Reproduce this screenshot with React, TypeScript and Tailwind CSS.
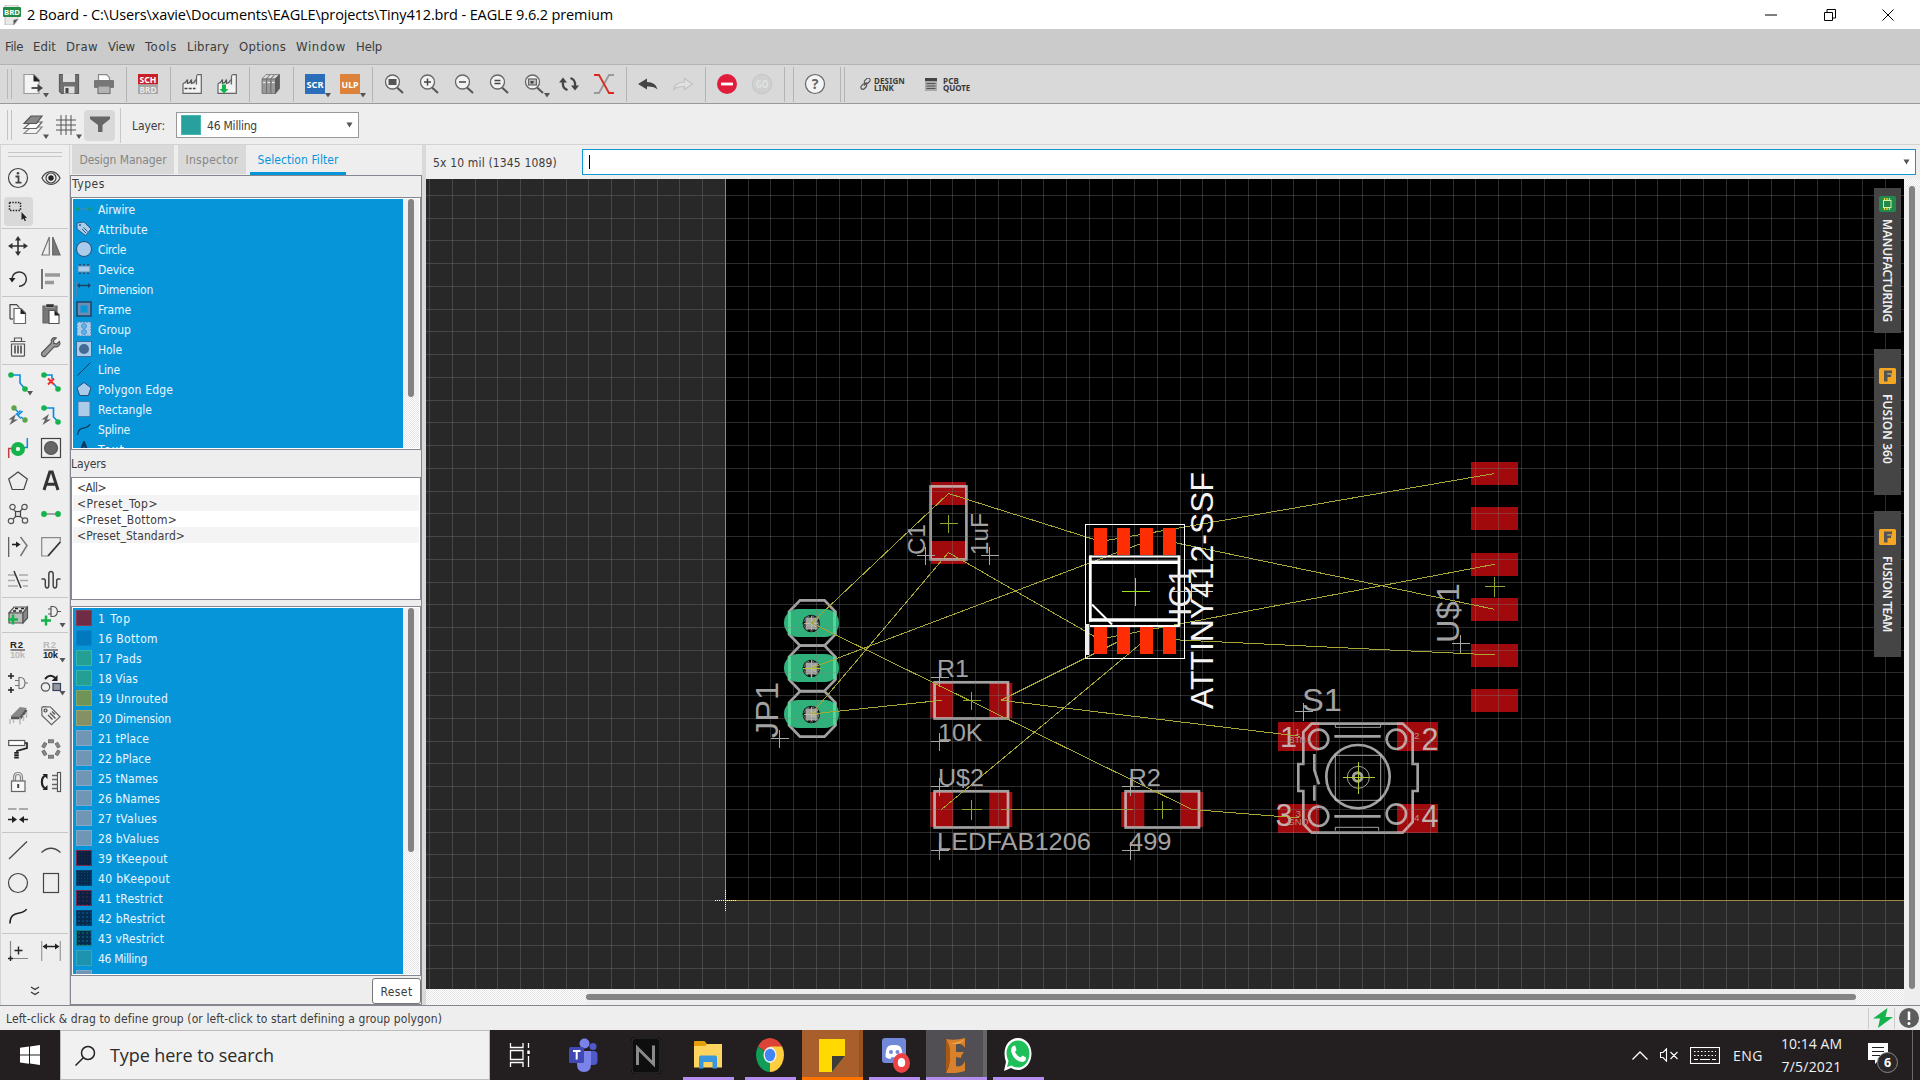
import React, { useLayoutEffect, useRef, useState } from "react";

/* Text whose tracking is computed so that it fills a given advance width. */
function Fit({ w, className = "", children }: { w: number; className?: string; children: string }) {
  const ref = useRef<HTMLSpanElement>(null);
  const [ls, setLs] = useState(0);
  useLayoutEffect(() => {
    if (ref.current && children.length > 0) {
      setLs((w - ref.current.getBoundingClientRect().width) / children.length);
    }
  }, [w, children]);
  return (
    <span ref={ref} className={"inline-block shrink-0 whitespace-pre " + className} style={{ letterSpacing: ls }}>
      {children}
    </span>
  );
}

const UI = "font-['DejaVu_Sans_Condensed','DejaVu_Sans',sans-serif]";

function Ico({ children, arrow }: { children: React.ReactNode; arrow?: boolean }) {
  return (
    <svg width="20" height="20" viewBox="0 0 20 20" className="shrink-0 overflow-visible" fill="none" stroke="#444" strokeWidth="1.2">
      {children}
      {arrow && <path d="M20 19h6l-3 4.5z" fill="#555" stroke="none" />}
    </svg>
  );
}

const G = "#14b34c";
const B = "#0a8de0";

const I = {
  info: (
    <>
      <circle cx="10" cy="10" r="9.5" />
      <path d="M7.5 8.5h3v6M7.5 14.7h6" strokeWidth="1.8" />
      <circle cx="10" cy="5.3" r="1.3" fill="#444" stroke="none" />
    </>
  ),
  eye: (
    <>
      <path d="M1 10C5 1.500 15 1.500 19 10C15 18.500 5 18.500 1 10z" />
      <circle cx="10" cy="10" r="5" />
      <circle cx="10" cy="10" r="2.700" fill="#222" stroke="none" />
    </>
  ),
  select: (
    <>
      <rect x="1.500" y="1.500" width="11" height="8" strokeDasharray="1.500 1.300" stroke="#222" strokeWidth="1.500" />
      <path d="M13.500 11v8l2-1.600 1.300 2.800 1.200-.600-1.300-2.600h2.300z" fill="#222" stroke="none" />
    </>
  ),
  move: (
    <path d="M10 0l3 4.500h-2.200v4.700h4.700V7l4.500 3-4.500 3v-2.200h-4.700v4.700H13L10 20l-3-4.500h2.200v-4.700H4.500V13L0 10l4.500-3v2.200h4.700V4.500H7z" fill="#333" stroke="none" />
  ),
  mirror: (
    <>
      <path d="M8.300 1v18H1z" stroke="#777" />
      <path d="M11.700 1v18H19z" fill="#777" stroke="#666" />
    </>
  ),
  rotate: (
    <>
      <path d="M4 9.500a7.200 7.200 0 1 1 7 7.800" stroke="#333" strokeWidth="1.500" />
      <path d="M1 9h6.500L4 13.500z" fill="#222" stroke="none" />
    </>
  ),
  align: (
    <>
      <path d="M1 0v20" stroke="#222" />
      <path d="M4 6h15M4 13.500h9" stroke="#999" strokeWidth="3.700" />
    </>
  ),
  copy: (
    <>
      <path d="M2 15V.700h6.500l3 3" />
      <path d="M2 15h3" />
      <path d="M6 4.500h7l4.500 4.500v10.500H6z" fill="#fff" stroke="#666" />
      <path d="M12.500 4.500l5.500 5.500h-5.500z" fill="#222" stroke="none" />
    </>
  ),
  paste: (
    <>
      <path d="M2 2h14v17H2z" fill="#777" stroke="#666" />
      <path d="M5 0h8v3.500H5z" fill="#333" stroke="#ddd" strokeWidth=".5" />
      <path d="M8 6.500h6l4 4v9H8z" fill="#fff" stroke="#555" />
      <path d="M13.500 6.500l5 5h-5z" fill="#222" stroke="none" />
    </>
  ),
  trash: (
    <>
      <path d="M2.500 4.500h15M6.500 4V1h7v3M3.500 7v11.200q0 1 1 1h11q1 0 1-1V7z" stroke="#555" />
      <path d="M7 8.500v8M10 8.500v8M13 8.500v8" stroke="#555" strokeWidth="1.700" />
    </>
  ),
  wrench: (
    <path d="M18.500 4.500l-3 2.500-2.700-.800L12.500 3.500 15.300 1C12.500-.300 9.300 2 10.300 6L.700 15.800q-.700 2 .700 3.200 1.300 1 3 .100L13.300 9.700C17 10.700 20 7.500 18.500 4.500z" fill="#999" stroke="#555" />
  ),
  route: (
    <>
      <path d="M3 3h9v8l5 6" stroke={B} strokeWidth="1.600" />
      <circle cx="3" cy="3" r="2.800" fill={G} stroke="none" />
      <circle cx="17" cy="17" r="2.800" fill={G} stroke="none" />
    </>
  ),
  ripup: (
    <>
      <path d="M3 3h8v4M13 12l4 5" stroke={B} strokeWidth="1.600" />
      <circle cx="3" cy="3" r="2.800" fill={G} stroke="none" />
      <circle cx="17" cy="17" r="2.800" fill={G} stroke="none" />
      <path d="M7 6.500l6 6M13 6.500l-6 6" stroke="#f22d2d" strokeWidth="2" />
    </>
  ),
  autor: (
    <>
      <path d="M6 3l4 4M13 12l4 3" stroke={B} strokeWidth="1.500" />
      <path d="M8 8.500l5 5M9.500 11l5-5M8.500 9.500l4-4" stroke={B} strokeWidth="1.500" />
      <circle cx="6" cy="3" r="2.700" fill="#5fa34a" stroke="none" />
      <circle cx="17" cy="15" r="2.700" fill="#5fa34a" stroke="none" />
      <path d="M8 9L.500 14.500H4L1.500 20 10 14.500H6z" fill="#666" stroke="none" />
    </>
  ),
  fanout: (
    <>
      <path d="M3 3h9.500v9l5 5" stroke={B} strokeWidth="1.700" />
      <circle cx="3" cy="3" r="2.800" fill={G} stroke="none" />
      <circle cx="17" cy="17" r="2.800" fill={G} stroke="none" />
      <path d="M8 9L.500 14.500H4L1.500 20 10 14.500H6z" fill="#666" stroke="none" />
    </>
  ),
  via: (
    <>
      <path d="M.700 20V10.500H4" stroke="#c33d45" strokeWidth="1.500" />
      <path d="M19.300 0v9.500H16" stroke={B} strokeWidth="1.500" />
      <circle cx="10" cy="11" r="4.500" stroke={G} strokeWidth="5" />
      <circle cx="10" cy="11" r="2" fill="#e8f5e8" stroke="none" />
    </>
  ),
  hole: (
    <>
      <rect x=".500" y=".500" width="19" height="19" />
      <circle cx="10" cy="10" r="6.500" fill="#666" stroke="#555" />
    </>
  ),
  polygon: <path d="M10 1l9.300 7-3.500 10.500H4.200L.700 8z" />,
  text: <path d="M3 19L8.800 1h2.400L17 19M5.500 13.200h9" stroke="#333" strokeWidth="3" />,
  ratsnest: (
    <>
      <path d="M4.500 4.500L15.500 15.500M15 4L4.500 16" stroke="#555" />
      {[[4.500, 3], [16.500, 3], [3, 17], [17, 16.500]].map(([x, y], i) => (
        <circle key={i} cx={x} cy={y} r="2.700" fill="#eee" stroke="#555" />
      ))}
      <rect x="7.500" y="7.500" width="5" height="5" fill="#ddd" />
    </>
  ),
  airwire: (
    <>
      <path d="M3 10h14" stroke="#888" strokeWidth="1.500" />
      <circle cx="3" cy="10" r="2.900" fill={G} stroke="none" />
      <circle cx="17" cy="10" r="2.900" fill={G} stroke="none" />
    </>
  ),
  mitersplit: (
    <>
      <path d="M.700 0v20" stroke="#555" />
      <path d="M4 7.500h7" stroke="#222" strokeWidth="1.600" />
      <path d="M8 4.500L12.500 7.500 8 10.500z" fill="#222" stroke="none" />
      <path d="M12.500 0L19 8.500 12.500 19" stroke="#777" strokeWidth="1.500" />
    </>
  ),
  miter: (
    <>
      <path d="M7 19H.700V.700h18.600V5" stroke="#888" />
      <path d="M19.300 5L7 19" stroke="#333" strokeWidth="1.800" />
    </>
  ),
  meanderA: (
    <>
      <path d="M0 5h7M11 5h9M0 10.500h7M12 10.500h8M0 16h10M15 16h5" stroke="#aaa" strokeWidth="1.500" />
      <path d="M6 1l7 17" stroke="#333" strokeWidth="1.500" />
    </>
  ),
  meander: (
    <path d="M.500 9H3q1.300 0 1.300 2v4q0 3 1.800 3 1.700 0 1.700-3V4.500Q7.800 1.500 10 1.500q2.200 0 2.200 3V15q0 3 1.700 3 1.800 0 1.800-3v-4q0-2 1.300-2h2.500" stroke="#444" strokeWidth="1.500" />
  ),
  brick: (
    <>
      <path d="M1 8l5-6h13l-4 6z" fill="#ddd" stroke="#555" />
      <path d="M1 8h14v10H1z" fill="#bbb" stroke="#555" />
      <path d="M15 8l4.500-6v11L15 18z" fill="#888" stroke="#555" />
      <path d="M7 3.500h3M13 3.500h3M5 6h3M11 6h3" stroke="#222" strokeWidth="1.500" />
      <path d="M5 9.500v10M0 14.500h10" stroke={G} strokeWidth="2.500" />
    </>
  ),
  gate: (
    <>
      <path d="M10 1.500h1.500q4.500 0 5 5-.500 5-5 5H10zM7 4h3M7 9h3M16.500 6.500H20" stroke="#555" />
      <path d="M5 10.500v10M0 15.500h10" stroke={G} strokeWidth="2.500" />
    </>
  ),
  name: (
    <>
      <path d="M2.500 10h14.500" stroke="#444" />
      <text x="2" y="7.500" fontSize="9.500" fontWeight="700" fill="#222" stroke="none" textLength="13" fontFamily="Liberation Sans">R2</text>
      <text x="2" y="17.700" fontSize="9.500" fontWeight="700" fill="#bbb" stroke="none" textLength="15" fontFamily="Liberation Sans">10k</text>
    </>
  ),
  value: (
    <>
      <path d="M2.500 10h14.500" stroke="#444" />
      <text x="2" y="7.500" fontSize="9.500" fontWeight="700" fill="#bbb" stroke="none" textLength="13" fontFamily="Liberation Sans">R2</text>
      <text x="2" y="17.700" fontSize="9.500" fontWeight="700" fill="#222" stroke="none" textLength="15" fontFamily="Liberation Sans">10k</text>
    </>
  ),
  smash: (
    <>
      <path d="M11 4.500h1.500q4.200 0 4.500 5.500-.300 5.500-4.500 5.500H11zM7 7.500h4M7 12.500h4M17 10h3" stroke="#777" />
      <path d="M3 0v6M0 3h6M3 14v6M0 17h6" stroke="#222" strokeWidth="1.500" />
    </>
  ),
  replace: (
    <>
      <circle cx="4.500" cy="14" r="4.200" stroke="#555" />
      <rect x="12" y="10.500" width="7.500" height="7" fill="#999" stroke="#346" />
      <path d="M4 6q5-6 10.500-1" stroke="#222" strokeWidth="2" />
      <path d="M16.500 2v6h-6z" fill="#222" stroke="none" />
    </>
  ),
  pinswap: (
    <>
      <path d="M3 10L12 1l7 1-6 9H3z" fill="#888" stroke="none" />
      <path d="M3 12h9.500l6-8" stroke="#555" strokeWidth="2.500" />
      <path d="M2 13v5M5.500 13v4M12 11.500v7M15.500 9v6M18.500 6v6" stroke="#bbb" strokeWidth="1.500" />
    </>
  ),
  tag: (
    <>
      <path d="M.700 2Q1 .700 2.500.700L9.500 1 19 10.800 10.500 18.700 1 9.500z" stroke="#666" />
      <circle cx="4.500" cy="4.500" r="1.500" />
      <path d="M7 9l4.500 4.500M9 7l5.500 5.500M11 5.500l3 3" stroke="#555" strokeWidth="1.300" />
    </>
  ),
  paint: (
    <>
      <rect x=".700" y="1.500" width="16" height="5" fill="#fff" stroke="#555" />
      <path d="M17 4h2v5l-10 3v2" stroke="#222" strokeWidth="1.700" />
      <path d="M8.500 13v7" stroke="#222" strokeWidth="4.500" strokeDasharray="1.700 .5" />
    </>
  ),
  ring: (
    <g fill="#888" stroke="#666" strokeWidth=".8">
      {[0, 60, 120, 180, 240, 300].map((a) => (
        <rect key={a} x="7.500" y=".800" width="5" height="3" transform={`rotate(${a} 10 10)`} />
      ))}
    </g>
  ),
  lock: (
    <>
      <path d="M5.500 9V5.500q0-5 4.500-5t4.500 5V9M7.500 9V5.500q0-3 2.500-3t2.500 3V9" stroke="#888" />
      <rect x="3.500" y="9" width="13.500" height="10.500" fill="#f8f8f8" stroke="#666" />
      <path d="M10.200 12v4" stroke="#444" strokeWidth="2" />
    </>
  ),
  swap: (
    <>
      <path d="M4.500 3.500Q.800 5 .900 10t3.600 6.500" stroke="#222" strokeWidth="2.200" />
      <path d="M1.500 2h5v5zM1.500 18h5v-5z" fill="#222" stroke="none" />
      <path d="M11 3.500h5M11 7.500h5M11 12.500h5M11 16.500h5" stroke="#666" strokeWidth="1.500" />
      <rect x="16.500" y=".500" width="3" height="19" fill="#fff" stroke="#555" />
    </>
  ),
  join: (
    <>
      <path d="M0 4h8.500M11 4h9" stroke="#aaa" strokeWidth="1.800" />
      <path d="M0 14.500h5M15 14.500h5" stroke="#222" strokeWidth="1.500" />
      <path d="M4 11l5 3.500L4 18zM16 11l-5 3.500 5 3.500z" fill="#222" stroke="none" />
    </>
  ),
  line: <path d="M1 19L19 1.500" stroke="#444" />,
  arc: <path d="M.500 12.500Q10 4 19.500 12.500" stroke="#444" />,
  circle: <circle cx="10" cy="10" r="9.500" />,
  rect: <rect x="2.500" y=".500" width="15" height="19" />,
  spline: <path d="M2 17.500C2 3 15 10 18.500 3" stroke="#222" strokeWidth="1.600" />,
  mark: (
    <>
      <path d="M2.500 0v15M5 17.500h15" stroke="#888" />
      <path d="M2.500 15v5M0 17.500h5M10.500 5.500v8M6.500 9.500h8" stroke="#222" strokeWidth="1.400" />
    </>
  ),
  dim: (
    <>
      <path d="M.700 0v20M19.300 0v20" stroke="#999" />
      <path d="M4 5.500h12" stroke="#222" strokeWidth="1.500" />
      <path d="M6 2.500L1.500 5.500 6 8.500zM14 2.500l4.500 3-4.500 3z" fill="#222" stroke="none" />
    </>
  ),
};

type IK = keyof typeof I;
const toolGroups: { cls: string; items: (IK | null)[] }[] = [
  { cls: "h-[67px]", items: ["info", "eye", "select", null] },
  { cls: "h-[67px]", items: ["move", "mirror", "rotate", "align"] },
  { cls: "h-[67px]", items: ["copy", "paste", "trash", "wrench"] },
  { cls: "h-[232px]", items: ["route", "ripup", "autor", "fanout", "via", "hole", "polygon", "text", "ratsnest", "airwire", "mitersplit", "miter", "meanderA", "meander"] },
  { cls: "h-[34px]", items: ["brick", "gate"] },
  { cls: "h-[199px]", items: ["name", "value", "smash", "replace", "pinswap", "tag", "paint", "ring", "lock", "swap", "join", null] },
  { cls: "h-[100px]", items: ["line", "arc", "circle", "rect", "spline", null] },
  { cls: "h-[34px]", items: ["mark", "dim"] },
];
const withArrow: (IK | null)[] = ["gate", "value", "replace"];

function ToolPalette() {
  return (
    <div className="w-[70px] shrink-0 border-x border-[#d4d4d4] bg-[#eee] flex flex-col">
      <div className="h-[16px] px-[7px] pt-[7px] shrink-0">
        <div className="h-[5px] border-y border-[#c6c6c6]" />
      </div>
      {toolGroups.map((g, i) => (
        <React.Fragment key={i}>
          {i > 0 && <div className="h-px shrink-0 mx-px bg-[#c6c6c6]" />}
          <div className={"grid grid-cols-[33px_33px] auto-rows-fr shrink-0 pl-[0.5px] " + g.cls}>
            {g.items.map((k, j) => (
              <div key={j} className="flex items-center justify-center min-h-0">
                {k === "select" ? (
                  <div className="size-[29px] shrink-0 rounded-sm bg-[#d9d9d9] flex items-center justify-center">
                    <Ico>{I.select}</Ico>
                  </div>
                ) : (
                  k && (
                    <Ico>
                      {I[k]}
                      {withArrow.includes(k) && <path d="M18.500 18h6l-3 4.500z" fill="#555" stroke="none" />}
                      {k === "route" && <path d="M19 19h6l-3 4.500z" fill="#555" stroke="none" />}
                    </Ico>
                  )
                )}
              </div>
            ))}
          </div>
        </React.Fragment>
      ))}
      <div className="grow flex justify-center pt-[18px]">
        <svg width="10" height="10" viewBox="0 0 10 10" fill="none" stroke="#333" strokeWidth="1.300">
          <path d="M1 1l4 2.500L9 1M1 6l4 2.500L9 6" />
        </svg>
      </div>
    </div>
  );
}

function Mag({ children }: { children?: React.ReactNode }) {
  return (
    <>
      <path d="M13 13.500l6 5.500" stroke="#555" strokeWidth="2" />
      <circle cx="8.500" cy="8" r="7" fill="#f2f2f2" stroke="#666" strokeWidth="1.300" />
      {children}
    </>
  );
}

function Sep() {
  return <div className="w-px h-[35px] bg-[#b4b4b4]" />;
}

function Cell({ cls, children }: { cls: string; children: React.ReactNode }) {
  return <div className={"flex items-center justify-center shrink-0 " + cls}>{children}</div>;
}

function Factory({ children }: { children: React.ReactNode }) {
  return (
    <Ico>
      <path d="M1 9.500L14 10.500V2q0-1.300 1.500-1.300h3.800v18.600H1z" fill="#f2f2f2" stroke="none" />
      <path d="M1 9.500v9.800h18.300V.700h-3.300q-1.500 0-1.500 2v7.800" stroke="#666" />
      <path d="M1 9.500q3-.700 4.500-4v4q3-.700 4-4v4q3-.700 4.500-4" stroke="#555" />
      {children}
    </Ico>
  );
}

function MainToolbar() {
  return (
    <div className="h-[40px] bg-[#d9d9d9] border-t border-t-[#b4b4b4] border-b border-b-[#9a9a9a] flex items-center">
      <div className="w-[15px] pl-[7px] flex gap-[3px] shrink-0"><div className="w-px h-[30px] bg-[#b8b8b8]" /><div className="w-px h-[30px] bg-[#b8b8b8]" /></div>
      <Cell cls="w-[36px]">
        <Ico arrow>
          <path d="M1 .500h10l5 5v14H1z" fill="#f4f4f4" stroke="#999" />
          <path d="M10.500.500l6 6v1h-6z" fill="#222" stroke="none" />
          <path d="M8.500 14h7" stroke="#555" strokeWidth="2" />
          <path d="M14.500 10l5.500 4-5.500 4z" fill="#444" stroke="none" />
        </Ico>
      </Cell>
      <Cell cls="w-[35px]">
        <Ico>
          <path d="M.500.500h19v19h-17l-2-2z" fill="#707070" stroke="#5c5c5c" />
          <rect x="4" y="0" width="12" height="8" fill="#ddd" stroke="none" />
          <rect x="5" y="12.500" width="10.500" height="7" fill="#ddd" stroke="none" />
          <rect x="6.500" y="14" width="3" height="5" fill="#444" stroke="none" />
        </Ico>
      </Cell>
      <Cell cls="w-[35px]">
        <Ico>
          <path d="M4.500 6V.700h8l3 3V6" fill="#fff" stroke="#888" />
          <rect x="0" y="6" width="20" height="8" rx="1" fill="#777" stroke="none" />
          <rect x="4" y="12" width="12" height="7.500" fill="#b4b4b4" stroke="#777" />
        </Ico>
      </Cell>
      <Cell cls="w-[10px]"><Sep /></Cell>
      <Cell cls="w-[34px]">
        <Ico>
          <rect width="20" height="10.500" fill="#c92027" stroke="none" />
          <rect y="10.500" width="20" height="9.500" fill="#a6a6a6" stroke="none" />
          <text x="1.500" y="8.800" fontSize="9.500" fontWeight="700" fill="#fff" stroke="none" textLength="17" lengthAdjust="spacingAndGlyphs" fontFamily="Noto Sans">SCH</text>
          <text x="1.500" y="18.700" fontSize="9.500" fontWeight="700" fill="#e8e8e8" stroke="none" textLength="17" lengthAdjust="spacingAndGlyphs" fontFamily="Noto Sans">BRD</text>
        </Ico>
      </Cell>
      <Cell cls="w-[10px]"><Sep /></Cell>
      <Cell cls="w-[34px]"><Factory><path d="M2.500 14.500h11" strokeWidth="1.700" strokeDasharray="3 1.200" /></Factory></Cell>
      <Cell cls="w-[36px]"><Factory><path d="M5 10.500h4v4.500h2.500L7 19.500 2.500 15H5z" fill={G} stroke="none" /></Factory></Cell>
      <Cell cls="w-[8px]"><Sep /></Cell>
      <Cell cls="w-[36px]">
        <Ico>
          {[1, 5.500, 10].map((x) => (
            <g key={x}>
              <path d={`M${x} 5l4-4.500h4l-4 4.500z`} fill="#ddd" stroke="#666" strokeWidth=".7" />
              <path d={`M${x} 5h4.500v14.500h-4.500z`} fill="#999" stroke="#666" strokeWidth=".7" />
              <path d={`M${x + 1} 8.500h2.500`} stroke="#eee" />
            </g>
          ))}
          <path d="M14.500 5l4-4.500v14l-4 5z" fill="#5c5c5c" stroke="#555" strokeWidth=".7" />
        </Ico>
      </Cell>
      <Cell cls="w-[9px]"><Sep /></Cell>
      <Cell cls="w-[34px]">
        <Ico arrow>
          <rect width="20" height="20" fill="#2a6db8" stroke="none" />
          <text x="1.500" y="13.500" fontSize="9.500" fontWeight="700" fill="#fff" stroke="none" textLength="17" lengthAdjust="spacingAndGlyphs" fontFamily="Noto Sans">SCR</text>
        </Ico>
      </Cell>
      <Cell cls="w-[36px]">
        <Ico arrow>
          <rect width="20" height="20" fill="#dd823b" stroke="none" />
          <text x="1.500" y="13.500" fontSize="9.500" fontWeight="700" fill="#fff" stroke="none" textLength="17" lengthAdjust="spacingAndGlyphs" fontFamily="Noto Sans">ULP</text>
        </Ico>
      </Cell>
      <Cell cls="w-[9px]"><Sep /></Cell>
      <Cell cls="w-[34px]"><Ico><Mag><rect x="4.500" y="5" width="8" height="6" fill="#555" stroke="none" /></Mag></Ico></Cell>
      <Cell cls="w-[35px]"><Ico><Mag><path d="M5 8h7M8.500 4.500v7" strokeWidth="1.500" /></Mag></Ico></Cell>
      <Cell cls="w-[35px]"><Ico><Mag><path d="M5 8h7" strokeWidth="1.500" /></Mag></Ico></Cell>
      <Cell cls="w-[35px]"><Ico><Mag><path d="M5.500 6.500h6M5.500 9.500h6" strokeWidth="1.500" /></Mag></Ico></Cell>
      <Cell cls="w-[35px]"><Ico arrow><Mag><rect x="4.500" y="5" width="8" height="6" fill="#bbb" stroke="#666" /><rect x="6.500" y="7" width="3" height="2.500" fill="#444" stroke="none" /></Mag></Ico></Cell>
      <Cell cls="w-[35px]">
        <Ico>
          <path d="M8.500 16Q3 14 4 8M11.500 4Q17 6 16 12" stroke="#444" strokeWidth="2.300" />
          <path d="M0 8.500h8L4 3.500zM12 11.500h8l-4 5z" fill="#444" stroke="none" />
        </Ico>
      </Cell>
      <Cell cls="w-[35px]">
        <Ico>
          <path d="M0 19h5L15 1h5" stroke="#999" strokeWidth="1.800" />
          <path d="M0 1h5l10 18h5" stroke="#d92a20" strokeWidth="1.800" />
        </Ico>
      </Cell>
      <Cell cls="w-[10px]"><Sep /></Cell>
      <Cell cls="w-[34px]"><Ico><path d="M0 10l9-5.500v3.500q9 0 10.500 7.500Q16 12 9 12.500v3z" fill="#444" stroke="none" /></Ico></Cell>
      <Cell cls="w-[36px]"><Ico><path d="M19.500 10l-8-5.500v3.500Q2 8 .700 15.200 4 12.500 11.500 12.500v3z" fill="#e0e0e0" stroke="#c2c2c2" /></Ico></Cell>
      <Cell cls="w-[9px]"><Sep /></Cell>
      <Cell cls="w-[34px]"><Ico><circle cx="10" cy="10" r="10" fill="#e01e3c" stroke="none" /><path d="M4 10h12" stroke="#fff" strokeWidth="2.800" /></Ico></Cell>
      <Cell cls="w-[36px]">
        <Ico>
          <circle cx="10" cy="10" r="9.700" fill="#d0d0d0" stroke="#c8c8c8" />
          <text x="3.700" y="13.500" fontSize="10" fill="#e2e2e2" stroke="none" textLength="12.500" lengthAdjust="spacingAndGlyphs" fontWeight="700" fontFamily="Noto Sans">GO</text>
        </Ico>
      </Cell>
      <Cell cls="w-[9px]"><Sep /></Cell>
      <Cell cls="w-[9px]"><Sep /></Cell>
      <Cell cls="w-[34px]">
        <Ico>
          <circle cx="10" cy="10" r="9.500" fill="#f4f4f4" stroke="#666" />
          <text x="10" y="15" textAnchor="middle" fontSize="14" fontWeight="700" fill="#666" stroke="none" fontFamily="Noto Sans">?</text>
        </Ico>
      </Cell>
      <div className="w-[28px] pl-[8px] flex gap-[3px] shrink-0"><Sep /><Sep /></div>
      <svg width="11" height="12" viewBox="0 0 11 12" className="mr-[3px] shrink-0" fill="none" stroke="#555" strokeWidth="1.200">
        <rect x="4" y="1" width="6.500" height="4" rx="2" transform="rotate(-45 7.200 3)" />
        <rect x=".500" y="6.500" width="6.500" height="4" rx="2" transform="rotate(-45 3.700 8.500)" />
        <path d="M4 7.500l3-3" />
      </svg>
      <div className="font-['Noto_Sans'] font-bold text-[8px] leading-[7.500px] text-[#3a3a3a] flex flex-col items-start w-[51px]">
        <Fit w={31}>DESIGN</Fit>
        <Fit w={20}>LINK</Fit>
      </div>
      <svg width="12" height="13" viewBox="0 0 12 13" className="shrink-0 mr-[6px]">
        <rect width="12" height="13" fill="#aaa" />
        <rect width="12" height="3" fill="#444" />
        <path d="M1.500 5.500h9M1.500 8h9M1.500 10.500h9" stroke="#555" />
      </svg>
      <div className="font-['Noto_Sans'] font-bold text-[8px] leading-[7.500px] text-[#3a3a3a] flex flex-col items-start">
        <Fit w={16}>PCB</Fit>
        <Fit w={27}>QUOTE</Fit>
      </div>
    </div>
  );
}

function LayerToolbar() {
  return (
    <div className={"h-[41px] pt-[2px] bg-[#eee] border-b border-[#d2d2d2] flex items-center text-[12px] text-[#3c3c3c] " + UI}>
      <div className="w-[16px] pl-[7px] flex gap-[3px] shrink-0"><div className="w-px h-[30px] bg-[#c4c4c4]" /><div className="w-px h-[30px] bg-[#c4c4c4]" /></div>
      <Cell cls="w-[33px]">
        <Ico>
          <path d="M1 18.500l7-6.500h11l-5.500 6.500z" fill="#f4f4f4" stroke="#888" />
          <path d="M1 13.500L8 7h11l-5.500 6.500z" fill="#fafafa" stroke="#666" />
          <path d="M1 8.500L8 1h11l-5.500 7.500z" fill="#888" stroke="#555" />
          <path d="M20 19.500h6l-3 4.500z" fill="#555" stroke="none" />
        </Ico>
      </Cell>
      <Cell cls="w-[34px]">
        <Ico>
          <path d="M5 0v20M10 0v20M15 0v20M0 5h20M0 10h20M0 15h20" stroke="#555" strokeWidth="1" />
          <path d="M20 19.500h6l-3 4.500z" fill="#555" stroke="none" />
        </Ico>
      </Cell>
      <div className="w-[31px] h-[31px] ml-px rounded-sm bg-[#d9d9d9] flex items-center justify-center">
        <Ico><path d="M0 1.500h20v2.500L12.500 10v7H8v-7L0 4z" fill="#666" stroke="none" /></Ico>
      </div>
      <div className="w-px h-[35px] bg-[#c8c8c8] ml-[5px] mr-[11px]" />
      <Fit w={33} className="pt-[2px]">Layer:</Fit>
      <div className="ml-[11px] w-[183px] h-[26px] border border-[#999] bg-white flex items-center pl-[4px] pr-[5px]">
        <div className="size-[20px] bg-[#27a09e] border border-[#45b8b4]" />
        <Fit w={50} className="ml-[6px] pt-[2px]">46 Milling</Fit>
        <svg width="7" height="6" viewBox="0 0 7 6" className="ml-auto"><path d="M.500.500h6l-3 5z" fill="#555" /></svg>
      </div>
    </div>
  );
}

const typeIcons: Record<string, React.ReactNode> = {
  Airwire: <><path d="M3 8h10" stroke="#4f87b0" /><circle cx="2" cy="8" r="2" fill="#109b72" stroke="none" /><circle cx="14" cy="8" r="2" fill="#109b72" stroke="none" /></>,
  Attribute: <><path d="M1 2l7-1 7 7-5.500 6.500L1 8z" fill="#aacbea" stroke="#28608a" /><circle cx="4" cy="4" r="1" fill="#28608a" /><path d="M6 8l4 4M7.500 6.500l4 4" stroke="#28608a" /></>,
  Circle: <circle cx="8" cy="8" r="7.500" fill="#aacbea" stroke="#28507a" />,
  Device: <><path d="M4 3v10M8 3v10M12 3v10" stroke="#234f75" strokeWidth="2" /><rect x="2" y="5" width="12" height="6" fill="#aacbea" stroke="#5590c0" /></>,
  Dimension: <><path d="M.500 0v16M15.500 0v16" stroke="#4a85b5" /><path d="M2 4.500h12" stroke="#1d4468" strokeWidth="1.500" /><path d="M1 4.500L4 2v5zM15 4.500L12 2v5z" fill="#1d4468" stroke="none" /></>,
  Frame: <><rect x="1" y="1" width="14" height="14" fill="#6d8eb4" stroke="#1d4468" strokeWidth="1.500" /><rect x="4.500" y="4.500" width="7" height="7" fill="#0795da" stroke="none" /></>,
  Group: <><rect x="1" y="1" width="14" height="14" fill="#aacbea" stroke="#4680b0" strokeDasharray="2 1" /><circle cx="8" cy="5" r="2.500" fill="#61b1e6" stroke="#4a9ad5" /><circle cx="8" cy="11" r="2.500" fill="#61b1e6" stroke="#4a9ad5" /></>,
  Hole: <><rect x=".500" y=".500" width="15" height="15" fill="#aacbea" stroke="#3f6f9c" /><circle cx="8" cy="8" r="5" fill="#426c94" stroke="none" /></>,
  Line: <path d="M1.500 14.500l13-13" stroke="#153a5c" />,
  "Polygon Edge": <path d="M8 1.500l7 5.300-2.700 7.700H3.700L1 6.800z" fill="#aacbea" stroke="#28507a" />,
  Rectangle: <rect x="2" y=".500" width="12" height="15" fill="#aacbea" stroke="#4a80b0" />,
  Spline: <path d="M1.500 14C3 3 11 10 14 3" stroke="#103050" strokeWidth="1.200" />,
  Text: <path d="M3 15L8 1.500 13 15M5 10h6" stroke="#123a60" strokeWidth="2.500" />,
};
const types: [string, number][] = [["Airwire", 37], ["Attribute", 50], ["Circle", 28], ["Device", 36], ["Dimension", 55], ["Frame", 33], ["Group", 33], ["Hole", 24], ["Line", 22], ["Polygon Edge", 75], ["Rectangle", 54], ["Spline", 32], ["Text", 27]];

const layers: [string, string, number][] = [
  ["1 Top", "bg-[#702b45] border-[#8b3a55]", 33],
  ["16 Bottom", "bg-[#0079bf] border-[#0a84cb]", 60],
  ["17 Pads", "bg-[#23a093] border-[#37b8a4]", 44],
  ["18 Vias", "bg-[#23a093] border-[#37b8a4]", 40],
  ["19 Unrouted", "bg-[#709458] border-[#85a865]", 70],
  ["20 Dimension", "bg-[#859064] border-[#9ca474]", 73],
  ["21 tPlace", "bg-[#7096b6] border-[#82a8c8]", 51],
  ["22 bPlace", "bg-[#7096b6] border-[#82a8c8]", 53],
  ["25 tNames", "bg-[#7096b6] border-[#82a8c8]", 60],
  ["26 bNames", "bg-[#7096b6] border-[#82a8c8]", 62],
  ["27 tValues", "bg-[#7096b6] border-[#82a8c8]", 59],
  ["28 bValues", "bg-[#7096b6] border-[#82a8c8]", 61],
  ["39 tKeepout", "bg-[#0b2144] border-[#7a2a4a] bg-[radial-gradient(#2e2347_1px,transparent_1px)] bg-[size:3px_3px]", 70],
  ["40 bKeepout", "bg-[#042a4e] border-[#07426f] bg-[radial-gradient(#07487a_1px,transparent_1px)] bg-[size:3px_3px]", 72],
  ["41 tRestrict", "bg-[#0b2144] border-[#7a2a4a] bg-[radial-gradient(#2e2347_1px,transparent_1px)] bg-[size:4px_4px]", 65],
  ["42 bRestrict", "bg-[#042a4e] border-[#07426f] bg-[radial-gradient(#07487a_1px,transparent_1px)] bg-[size:4px_4px]", 67],
  ["43 vRestrict", "bg-[#052c4c] border-[#14807c] bg-[radial-gradient(#0b5066_1px,transparent_1px)] bg-[size:4px_4px]", 66],
  ["46 Milling", "bg-[#1e93b0] border-[#35a8c0]", 49],
  ["", "bg-[#7096b6] border-[#82a8c8]", 0],
];

const CHECK = "bg-[conic-gradient(#e4e4e4_25%,#fff_0_50%,#e4e4e4_0_75%,#fff_0)] bg-[size:2px_2px]";

function FilterPanel() {
  return (
    <div className={"w-[352px] shrink-0 bg-[#eee] flex flex-col text-[12px] " + UI}>
      <div className="h-[30px] flex text-[#868686] shrink-0 pl-[2px]">
        <div className="w-[102px] h-[29px] bg-[#d9d9d9] flex items-center justify-center"><Fit w={87}>Design Manager</Fit></div>
        <div className="w-[68px] h-[29px] ml-[4px] bg-[#d9d9d9] flex items-center justify-center"><Fit w={53}>Inspector</Fit></div>
        <div className="w-[96px] h-[30px] ml-[4px] text-[#0795da] border-b-[3px] border-[#0795da] flex items-center justify-center pt-[2px]"><Fit w={81}>Selection Filter</Fit></div>
      </div>
      <div className="grow min-h-0 border border-[#868690] flex flex-col text-[#3c3c3c]">
        <div className="h-[21px] pl-px leading-[17px] shrink-0"><Fit w={33}>Types</Fit></div>
        <div className="h-[253px] shrink-0 border border-[#868690] bg-white p-px flex">
          <div className="w-[330px] bg-[#0795da] overflow-hidden text-[#eaf6ff]">
            {types.map(([t, w]) => (
              <div key={t} className="h-[20px] pl-[3px] flex items-center gap-[6px]">
                <svg width="16" height="16" viewBox="0 0 16 16" fill="none" strokeWidth="1">{typeIcons[t]}</svg>
                <Fit w={w} className="pt-[2px]">{t}</Fit>
              </div>
            ))}
          </div>
          <div className={"grow " + CHECK}>
            <div className="h-[198px] bg-[#f0f0f0] pl-[5px]"><div className="w-[6px] h-full rounded-full bg-[#838383]" /></div>
          </div>
        </div>
        <div className="h-[27px] leading-[29px] shrink-0"><Fit w={35}>Layers</Fit></div>
        <div className="h-[123px] shrink-0 border border-[#868690] bg-white px-px pt-px">
          {([["<All>", 29], ["<Preset_Top>", 81], ["<Preset_Bottom>", 100], ["<Preset_Standard>", 108]] as [string, number][]).map(([t, w]) => (
            <div key={t} className="h-[16px] leading-[19px] pl-[4px] even:bg-[#f4f4f4]"><Fit w={w}>{t}</Fit></div>
          ))}
        </div>
        <div className="h-[6px] shrink-0" />
        <div className="h-[370px] shrink-0 border border-[#868690] bg-white p-px flex">
          <div className="w-[330px] bg-[#0795da] overflow-hidden text-[#eaf6ff]">
            {layers.map(([t, c, w], i) => (
              <div key={i} className="h-[20px] pl-[3px] flex items-center gap-[6px]">
                <div className={"size-[16px] border shrink-0 " + c} />
                {t && <Fit w={w} className="pt-[2px]">{t}</Fit>}
              </div>
            ))}
          </div>
          <div className={"grow " + CHECK}>
            <div className="h-[244px] bg-[#f0f0f0] pl-[5px]"><div className="w-[6px] h-full rounded-full bg-[#838383]" /></div>
          </div>
        </div>
        <div className="grow flex justify-end items-start pt-[2px]">
          <div className="w-[49px] h-[26px] rounded-[3px] border border-[#777] bg-white flex items-center justify-center"><Fit w={32} className="pt-[2px]">Reset</Fit></div>
        </div>
      </div>
    </div>
  );
}

/* ---- board drawing ---- */
const OX = 725.4;
const OY = 900.4;
const P = 22.742;
const SILK = "rgba(206,206,206,.78)";
const NAME = "#a2a2a2";
const RED = "#a00a0c";

function Cross({ x, y, r = 9, c = "#a8a8a8" }: { x: number; y: number; r?: number; c?: string }) {
  return <path d={`M${x - r} ${y}h${2 * r}M${x} ${y - r}v${2 * r}`} stroke={c} strokeWidth="1" shapeRendering="crispEdges" />;
}

function T({ x, y, s = 24, l, v, c = NAME, children }: { x: number; y: number; s?: number; l: number; v?: boolean; c?: string; children: string }) {
  return (
    <text x={x} y={y} fontSize={s} fill={c} textLength={l} lengthAdjust="spacingAndGlyphs" fontFamily="Liberation Sans, Arial, sans-serif" transform={v ? `rotate(-90 ${x} ${y})` : undefined}>
      {children}
    </text>
  );
}

function Part({ x, y }: { x: number; y: number }) {
  return (
    <g>
      <path d={`M${x - 41} ${y - 17.500}h23v35h-23zM${x + 18} ${y - 17.500}h23v35h-23z`} fill={RED} />
      <rect x={x - 36.700} y={y - 18.200} width="73.400" height="36.200" fill="none" stroke={SILK} strokeWidth="2.700" />
    </g>
  );
}

const wires = [
  [811.5, 623, 948.5, 493.5], [948.5, 493.5, 1100.5, 541.5], [1100.5, 541.5, 1494.5, 473.5],
  [811.5, 714, 948.5, 552.5], [948.5, 552.5, 1100.5, 640], [811.5, 668, 1146.5, 541.5],
  [1169.5, 541.5, 1494.5, 609.3], [1100.5, 639, 1494.5, 564.3], [1169.5, 639.5, 1494.5, 655],
  [811.5, 623, 1191.7, 809.3], [811.5, 714, 941.7, 700.3], [1001, 700.3, 1123.5, 639],
  [1001, 700.3, 1300, 736.3], [941.5, 809.5, 1146.5, 639], [1000.5, 809.5, 1133, 809.5], [1191.7, 809.5, 1299.3, 818],
];

function Board() {
  const vx: number[] = [];
  for (let k = -13; k <= 51; k++) vx.push(Math.floor(OX + k * P) + 0.5);
  const hy: number[] = [];
  for (let k = -31; k <= 3; k++) hy.push(Math.floor(OY + k * P) + 0.5);
  return (
    <svg width="1478" height="810" viewBox="426 179 1478 810" className="block">
      <rect x="426" y="179" width="1478" height="810" fill="#282828" />
      <rect x="725" y="179" width="1179" height="721" fill="#000" />

      {/* C1 */}
      <path d="M931 482h35v23h-35zM931 541h35v23h-35z" fill={RED} />
      <rect x="930.600" y="486.400" width="35.800" height="73" fill="none" stroke={SILK} strokeWidth="2.700" />
      <Part x={971.3} y={700.5} />
      <Part x={971.3} y={809.5} />
      <Part x={1162.3} y={809.5} />
      {[462, 507, 553, 598, 644, 689].map((y) => <rect key={y} x="1471" y={y} width="47" height="23" fill={RED} />)}

      {/* JP1 header */}
      {[623, 668.300, 714].map((y) => (
        <path key={y} d={`M800 ${y - 22.700}h24.500l11 11.500v22.400l-11 11.500h-24.500l-11-11.500v-22.400z`} fill="none" stroke={NAME} strokeWidth="2.700" />
      ))}
      {[623, 668, 714].map((y) => (
        <g key={y}>
          <rect x="784" y={y - 14} width="55" height="28" rx="14" fill="#30b07a" />
          <path d={`M789.500 ${y - 11.500}v23M834.500 ${y - 11.500}v23`} stroke="#55d597" strokeWidth="3" />
          <circle cx="811.300" cy={y + 0.500} r="8.700" fill="#0a0a0a" />
          <circle cx="811.300" cy={y + 0.500} r="7.500" fill="none" stroke="#999" strokeWidth=".8" strokeDasharray="3 2" />
          <rect x="805.500" y={y - 5.500} width="12" height="12" fill="#a4a4a0" />
          <path d={`M811.500 ${y}l7-5M811.500 ${y}l6 5M811.500 ${y - 7}v14M804 ${y + 0.500}h14`} stroke="#c8c8a0" strokeWidth=".8" />
        </g>
      ))}

      {/* S1 tact switch */}
      <g transform="translate(1240 440) scale(.33333)" fill="none" stroke={SILK} strokeWidth="8">
        <path d="M114 846h123v87H114zM471 846h123v87H471zM114 1092h123v87H114zM471 1092h123v87H471z" fill={RED} stroke="none" />
        <path d="M215 851H488L518 880V972H533V1053H518V1146L488 1178H215L190 1152V1053H175V972H190V876z" />
        <circle cx="354" cy="1010" r="95" />
        <circle cx="355" cy="1012" r="33" strokeWidth="3" />
        <circle cx="353" cy="1011" r="13" strokeWidth="9" />
        <path d="M286 946H422V1081H286zM286 855V862H422V855M286 1172V1162H416V1172" strokeWidth="3" />
        <circle cx="236" cy="898" r="29" />
        <circle cx="469" cy="898" r="29" />
        <circle cx="236" cy="1129" r="29" />
        <circle cx="469" cy="1122" r="29" />
        <path d="M283 889H422M283 1129H422M223 942V990L237 1033M223 1036V1082" />
      </g>
      <T x={1280} y={747.3} s={30} l={17} c="#c4b0b0">1</T>
      <T x={1421.5} y={749.7} s={32} l={17} c="#c4b0b0">2</T>
      <T x={1275.5} y={826} s={31} l={17} c="#c4b0b0">3</T>
      <T x={1421.5} y={827} s={31} l={17} c="#c4b0b0">4</T>
      <T x={1295} y={735} s={8.5} l={5} c="#b98a8a">1</T>
      <T x={1289} y={743} s={9} l={17} c="#b98a8a">BTN</T>
      <T x={1414} y={739} s={9.5} l={5.5} c="#b98a8a">2</T>
      <T x={1295.5} y={817} s={9} l={5.5} c="#b98a8a">3</T>
      <T x={1287.5} y={825} s={9.5} l={21} c="#b98a8a">GND</T>
      <T x={1414} y={821} s={9} l={5.5} c="#b98a8a">4</T>

      {/* airwires */}
      {wires.map(([a, b, c, d], i) => (
        <path key={i} d={`M${a} ${b}L${c} ${d}`} stroke="#a8a832" strokeWidth="1" shapeRendering="crispEdges" />
      ))}

      {/* grid */}
      <g stroke="#808080" strokeOpacity=".34" shapeRendering="crispEdges">
        {vx.map((x) => <path key={x} d={`M${x} 179V989`} />)}
        {hy.map((y) => <path key={y} d={`M426 ${y}H1904`} />)}
      </g>
      <path d="M725.500 179V900.500H1904" fill="none" stroke="#a08a48" shapeRendering="crispEdges" />
      <path d="M715 900.500h22M725.500 890v22" stroke="#fff" strokeDasharray="1 1" shapeRendering="crispEdges" />

      {/* IC1 */}
      {[1094, 1117, 1140, 1163].map((x) => (
        <path key={x} d={`M${x} 528h13v27h-13zM${x} 627h13v27h-13z`} fill="#ff2d04" />
      ))}
      <g fill="none" stroke="#fff">
        <rect x="1085.500" y="524.500" width="99" height="134" shapeRendering="crispEdges" />
        <path d="M1090 556.500h89.500M1090 626h89.500" strokeWidth="2" />
        <path d="M1089 562.300h90.500M1089 620h90.500" strokeWidth="3.500" />
        <path d="M1090.300 555.500v66M1179 555.500v71" strokeWidth="2.800" />
        <path d="M1092 604.500l20 20" strokeWidth="2" />
        <path d="M1087.300 624v31" stroke="#eee" strokeWidth="4" />
      </g>
      <Cross x={1135.5} y={591.5} r={14} c="#9be81f" />
      <path d="M1171 591.500h42M1191.500 583v18" stroke="#ccc" shapeRendering="crispEdges" />
      <T x={1191} y={616} s={32} l={48} v c="#ececec">IC1</T>
      <T x={1213} y={709} s={32} l={237} v c="#f4f4f4">ATTINY412-SSF</T>

      {/* part origins */}
      <Cross x={948.5} y={523.5} c="#8fa82c" />
      <Cross x={971.5} y={700.5} c="#8fa82c" />
      <Cross x={971.5} y={809.5} r={10} c="#8fa82c" />
      <Cross x={1162.5} y={809.5} c="#8fa82c" />
      <Cross x={1494.5} y={586.5} r={10} c="#8fa82c" />
      <Cross x={1358.5} y={777.5} r={16} c="#b4c832" />
      <Cross x={811.5} y={668.5} c="#b4c832" />

      {/* label origins */}
      <Cross x={925.5} y={555.5} />
      <Cross x={989.5} y={555.5} />
      <Cross x={779.5} y={738.5} />
      <Cross x={939.5} y={677.5} />
      <Cross x={939.5} y={741.5} />
      <Cross x={939.5} y={786.5} />
      <Cross x={939.5} y={850.5} />
      <Cross x={1130.5} y={786.5} />
      <Cross x={1130.5} y={850.5} />
      <Cross x={1460.5} y={643.5} />
      <Cross x={1303.5} y={711.5} />

      <T x={925} y={555} l={31} v>C1</T>
      <T x={988} y={555} l={42} v>1uF</T>
      <T x={778} y={738} s={32} l={56} v>JP1</T>
      <T x={937} y={677} l={32}>R1</T>
      <T x={938} y={741} l={44.500}>10K</T>
      <T x={938} y={786} l={46}>U$2</T>
      <T x={937} y={850} l={154}>LEDFAB1206</T>
      <T x={1128.5} y={786} l={32.5}>R2</T>
      <T x={1129} y={850} l={42.5}>499</T>
      <T x={1459} y={643} s={32} l={60} v>U$1</T>
      <T x={1302} y={711} s={32} l={40}>S1</T>
    </svg>
  );
}

function FLogo() {
  return (
    <svg width="17" height="16" viewBox="0 0 17 16" className="shrink-0">
      <rect width="17" height="16" rx="1.500" fill="#f5a623" />
      <path d="M5 2.500h8v2.500H8.500v2H12v2H8.500v4.500H5z" fill="#555" />
      <path d="M9 5.500h4v1.500H9z" fill="#888" />
    </svg>
  );
}

function SideTab({ cls, icon, label, w, gap }: { cls: string; icon: React.ReactNode; label: string; w: number; gap: string }) {
  const ref = useRef<HTMLSpanElement>(null);
  const [ls, setLs] = useState(0);
  useLayoutEffect(() => {
    if (ref.current) setLs((w - ref.current.getBoundingClientRect().height) / label.length);
  }, [w, label]);
  return (
    <div className={"w-[27px] bg-[#454545] flex flex-col items-center " + cls}>
      {icon}
      <span ref={ref} className={"mr-[2px] [writing-mode:vertical-rl] whitespace-nowrap font-['Noto_Sans'] font-semibold text-[12px] leading-[16px] text-[#f0f0f0] " + gap} style={{ letterSpacing: ls }}>{label}</span>
    </div>
  );
}

function BoardArea() {
  return (
    <div className="grow min-w-0 flex flex-col">
      <div className={"h-[34px] shrink-0 bg-[#eee] flex items-center pl-[7px] text-[12px] text-[#3c3c3c] " + UI}>
        <div className="w-[149px] pt-[2px]"><Fit w={124}>5x 10 mil (1345 1089)</Fit></div>
        <div className="w-[1334px] h-[26px] border border-[#0f97d6] bg-white flex items-center justify-between pl-[6px] pr-[5px]">
          <div className="w-px h-[14px] bg-black" />
          <svg width="7" height="6" viewBox="0 0 7 6"><path d="M.500.500h6l-3 5z" fill="#555" /></svg>
        </div>
      </div>
      <div className="h-[810px] shrink-0 flex">
        <div className="relative w-[1478px] h-[810px]">
          <Board />
          <div className="absolute right-[3px] top-[9px] flex flex-col gap-[16px]">
            <SideTab
              cls="h-[145px] pt-[8px]" gap="mt-[7px]" w={103} label="MANUFACTURING"
              icon={
                <svg width="17" height="16" viewBox="0 0 17 16" className="shrink-0">
                  <rect width="17" height="16" rx="2" fill="#1f8a4c" />
                  <path d="M5.500 2v12M8 2v12M10.500 2v12" stroke="#f2dc2c" strokeWidth="1.300" />
                  <rect x="4.500" y="4.500" width="7.500" height="7" fill="#1f8a4c" stroke="#d8f0a0" />
                </svg>
              }
            />
            <SideTab cls="h-[146px] pt-[19px]" gap="mt-[10px]" w={70} label="FUSION 360" icon={<FLogo />} />
            <SideTab cls="h-[146px] pt-[18px]" gap="mt-[11px]" w={76} label="FUSION TEAM" icon={<FLogo />} />
          </div>
        </div>
        <div className="w-[16px] bg-[#eee] flex flex-col">
          <div className={"h-[7px] " + CHECK} />
          <div className="w-[6px] ml-[5px] grow rounded-full bg-[#838383]" />
        </div>
      </div>
      <div className="grow bg-[#eee] flex">
        <div className={"w-[160px] " + CHECK} />
        <div className="w-[1270px] flex items-start pt-[5px]"><div className="w-full h-[6px] rounded-full bg-[#838383]" /></div>
        <div className={"w-[48px] " + CHECK} />
      </div>
    </div>
  );
}

function StatusBar() {
  return (
    <div className={"h-[25px] shrink-0 bg-[#eee] border-t border-[#868690] flex items-center text-[12px] text-[#3c3c3c] pl-[6px] " + UI}>
      <div className="w-[1862px] pt-[2px]"><Fit w={436}>Left-click &amp; drag to define group (or left-click to start defining a group polygon)</Fit></div>
      <div className="w-px h-[21px] bg-[#ccc]" />
      <svg width="20" height="20" viewBox="0 0 20 20" className="ml-[4px] mr-[2px]"><path d="M14.500 0L0 10.500h7L5 20l15-11h-7.500z" fill={G} /></svg>
      <div className="w-px h-[21px] bg-[#ccc] -ml-px" />
      <svg width="20" height="20" viewBox="0 0 20 20" className="ml-[4px]"><circle cx="10" cy="10" r="10" fill="#5c5c5c" /><path d="M10 3.500v8.500" stroke="#fff" strokeWidth="2.500" /><circle cx="10" cy="15.500" r="1.500" fill="#fff" /></svg>
    </div>
  );
}

function TaskItem({ cls = "", line = "", children }: { cls?: string; line?: string; children: React.ReactNode }) {
  return (
    <div className={"relative h-full flex items-center justify-center shrink-0 " + cls}>
      {children}
      {line && <div className={"absolute bottom-0 h-[3px] " + line} />}
    </div>
  );
}

function Taskbar() {
  return (
    <div className="h-[50px] shrink-0 bg-[#231f21] flex items-center font-['Noto_Sans']">
      <div className="w-[60px] flex justify-center">
        <svg width="20" height="20" viewBox="0 0 20 20" fill="#fff"><path d="M0 2.800l9-1.200v8H0zM10 1.400L20 0v9.500H10zM0 10.500h9v8.200l-9-1.200zM10 10.500h10V20l-10-1.400z" /></svg>
      </div>
      <div className="w-[430px] h-full bg-[#f1f1f1] border border-[#bbb] flex items-center pl-[14px] text-[#2b2b2b] text-[18px]">
        <svg width="21" height="21" viewBox="0 0 21 21" fill="none" stroke="#222" strokeWidth="1.500"><circle cx="13" cy="8" r="6.500" /><path d="M8.300 12.800L.500 20.500" /></svg>
        <Fit w={164} className="ml-[14px] font-['Open_Sans']">Type here to search</Fit>
      </div>
      <TaskItem cls="w-[60px]">
        <svg width="22" height="24" viewBox="0 0 22 24" fill="none" stroke="#fff" strokeWidth="1.300"><path d="M1.500 0v4.500h12.500V0M1.500 24v-4.500h12.500V24M1.500 7.500h12.500v9H1.500zM19.500 0v5M19.500 13v11" /><rect x="18.300" y="7.500" width="2.500" height="3.500" fill="#fff" stroke="none" /></svg>
      </TaskItem>
      <TaskItem cls="w-[66px]">
        <svg width="30" height="34" viewBox="0 0 30 34">
          <circle cx="25" cy="8.500" r="3.500" fill="#5059c9" /><rect x="19" y="13" width="10.500" height="14" rx="4" fill="#5059c9" />
          <circle cx="16.500" cy="5.500" r="5" fill="#7b83eb" /><path d="M9 13h14v13q0 8-7 8t-7-8z" fill="#7b83eb" />
          <rect x="1" y="9" width="15" height="16" rx="1.500" fill="#4048b5" />
          <path d="M5 13h7.500M8.700 13v8.500" stroke="#fff" strokeWidth="2" />
        </svg>
      </TaskItem>
      <TaskItem cls="w-[60px]">
        <svg width="30" height="37" viewBox="0 0 30 37"><rect width="30" height="37" rx="4" fill="#0e0e0e" /><rect x="1" y="1" width="28" height="35" rx="3.500" fill="none" stroke="#333" /><path d="M6.500 28V11l16 16V8.500" fill="none" stroke="#8a8a8a" strokeWidth="3" /></svg>
      </TaskItem>
      <TaskItem cls="w-[64px]" line="w-[51px] bg-[#b58df0]">
        <svg width="28" height="30" viewBox="0 0 28 30"><path d="M0 2q0-1 1-1h9.500l2.500 3h13v7H0z" fill="#e3a008" /><path d="M0 6h11l2-2h15v23.500H0z" fill="#ffd45e" /><path d="M5 28.500V17.500q0-2 2-2h14q2 0 2 2v11h-4.500V22h-9v6.500z" fill="#3997de" /></svg>
      </TaskItem>
      <TaskItem cls="w-[60px]" line="w-[51px] bg-[#b58df0]">
        <svg width="28" height="34" viewBox="0 0 28 28" preserveAspectRatio="none">
          <path d="M14 14L1.900 7A14 14 0 0 1 26.100 7z" fill="#db4437" /><path d="M14 14L1.900 7A14 14 0 0 0 14 28l6-10z" fill="#0f9d58" /><path d="M14 14L14 28A14 14 0 0 0 26.100 7H14z" fill="#ffcd40" />
          <circle cx="14" cy="14" r="6.500" fill="#f1f1f1" /><circle cx="14" cy="14" r="5.200" fill="#4285f4" />
        </svg>
      </TaskItem>
      <TaskItem cls="ml-[2px] w-[61px] bg-[#a85f2b] border-r-[4px] border-[#97521f]" line="-right-[4px] left-0 bg-[#ff7300]">
        <svg width="26" height="33" viewBox="0 0 26 33" className="ml-[2px]"><path d="M0 0h26v17L13 33H0z" fill="#ffd900" /><path d="M13 33V17h13z" fill="#3b3b3b" /></svg>
      </TaskItem>
      <TaskItem cls="w-[63px]" line="w-[51px] bg-[#b58df0]">
        <svg width="28" height="36" viewBox="0 0 28 36" className="overflow-visible ml-[3px]">
          <path d="M3 1h18q3 0 3 3v26l-5-4H3q-3 0-3-3V4q0-3 3-3z" fill="#7289da" />
          <path d="M3.500 20q0-9 3-11 3-1.500 5.500-1 2.500-.500 5.500 1 3 2 3 11-2.500 2-5 2l-1-2q-2.500.500-5 0l-1 2q-2.500 0-5-2z" fill="#fff" />
          <circle cx="9" cy="15" r="2" fill="#7289da" /><circle cx="15.500" cy="15" r="2" fill="#7289da" />
          <ellipse cx="19.500" cy="26" rx="8.500" ry="10" fill="#ed4245" /><ellipse cx="19.500" cy="25.500" rx="3.700" ry="4.500" fill="#fff" />
        </svg>
      </TaskItem>
      <TaskItem cls="w-[61px] bg-[#514e54] border-r-[4px] border-[#666]" line="-right-[4px] left-0 bg-[#b58df0]">
        <svg width="21" height="35" viewBox="0 0 21 35" className="ml-[2px]"><path d="M1 1q9 2 19-1v10q-3-5-9-4v8h8q-3 3-3 6l-5-1v9q6 2 9-5v10q-10 3-19 2l3-7V8z" fill="#d8802a" /><path d="M1 1l4 9v14l-4 11z" fill="#a85a14" /><path d="M5 6q8-1 15-5-6 6-9 5z" fill="#f0a850" /></svg>
      </TaskItem>
      <TaskItem cls="w-[62px]" line="w-[51px] bg-[#b58df0]">
        <svg width="28" height="34" viewBox="0 0 28 34"><path d="M14 0C22 0 27.500 7 27.500 15.500S22 32 14 32q-4 0-7-2L0 33l2-9Q.500 20 .500 15.500C.500 7 6 0 14 0z" fill="#fff" /><path d="M14 2.500c7 0 11.500 6 11.500 13S21 29.500 14 29.500q-4 0-6.500-2L3 29l1.500-6Q2.500 19.500 2.500 15.500C2.500 8.500 7 2.500 14 2.500z" fill="#1fc05a" /><path d="M9 8q2-1 2.500.500l1 3.500-1.500 2q2 4 5.500 5.500l2-2 3.500 2q0 4-3.500 4.500Q9.500 23 7 13q0-3.500 2-5z" fill="#fff" /></svg>
      </TaskItem>
      <div className="grow" />
      <div className="w-[289px] h-full flex items-center text-[#f0f0f0] text-[14px] shrink-0">
        <svg width="16" height="9" viewBox="0 0 16 9" fill="none" stroke="#fff" strokeWidth="1.300" className="ml-px mr-[12px]"><path d="M.500 8.500L8 1l7.500 7.500" /></svg>
        <svg width="18" height="14" viewBox="0 0 18 14" fill="none" stroke="#fff" strokeWidth="1.100" className="mr-[12px]"><path d="M.500 4.500H3L6.500.800v12.400L3 9.500H.500zM10.500 4l7 7M17.500 4l-7 7" /></svg>
        <svg width="30" height="17" viewBox="0 0 30 17" fill="none" stroke="#fff" strokeWidth="1.100" className="mr-[13px]"><rect x=".500" y=".500" width="29" height="16" /><path d="M4 4.500h22M4 8.500h22" strokeDasharray="1.500 2" /><path d="M4 12.500h4M10 12.500h10M22 12.500h4" /></svg>
        <div className="w-[30px]"><Fit w={30} className="font-['Open_Sans']">ENG</Fit></div>
        <div className="w-[61px] ml-[18px] h-full flex flex-col items-center pt-[2px] leading-[23px] font-['Open_Sans']"><Fit w={61}>10:14 AM</Fit><Fit w={60}>7/5/2021</Fit></div>
        <svg width="32" height="31" viewBox="0 0 32 31" className="ml-[26px] mt-[6px]">
          <path d="M0 0h20v17h-9l-4 4v-4H0z" fill="#fff" />
          <path d="M4 4.500h12M4 8.500h12M4 12.500h8" stroke="#231f21" strokeWidth="1.200" />
          <circle cx="19.500" cy="19.500" r="10" fill="#2b2729" stroke="#8a8a8a" />
          <text x="19.500" y="24" fontSize="12.500" fontWeight="700" textAnchor="middle" fill="#fff" fontFamily="Open Sans">6</text>
        </svg>
        <div className="w-px h-full bg-[#6a676a] ml-[12px]" />
      </div>
    </div>
  );
}

const menus: [string, number][] = [["File", 18], ["Edit", 23], ["Draw", 32], ["View", 27], ["Tools", 32], ["Library", 42], ["Options", 47], ["Window", 50], ["Help", 26]];

export default function App() {
  return (
    <div className="w-[1920px] h-[1080px] overflow-hidden flex flex-col bg-[#eee]">
      <div className="h-[29px] shrink-0 bg-white flex items-center pl-[3px]">
        <svg width="18" height="20" viewBox="0 0 18 20">
          <path d="M2 0h13v15l-4 5H2z" fill="#e8e8e8" stroke="#aaa" strokeWidth=".7" />
          <path d="M15 14l-4.500 6v-5z" fill="#555" />
          <rect y="2" width="18" height="10" rx="1" fill="#218a43" />
          <text x="1" y="10" fontSize="7.500" fontWeight="700" fill="#fff" textLength="16" lengthAdjust="spacingAndGlyphs" fontFamily="Noto Sans">BRD</text>
        </svg>
        <Fit w={586} className="ml-[6px] font-['Open_Sans'] text-[14.500px] text-black">2 Board - C:\Users\xavie\Documents\EAGLE\projects\Tiny412.brd - EAGLE 9.6.2 premium</Fit>
        <div className="grow" />
        <div className="flex items-center w-[129px] justify-between mr-[26px]">
          <svg width="12" height="12" viewBox="0 0 12 12"><path d="M0 6h12" stroke="#000" /></svg>
          <svg width="12" height="12" viewBox="0 0 12 12" fill="none" stroke="#000"><path d="M.500 3.500h8v8h-8zM3 3V.500h8.500V9H9" /></svg>
          <svg width="12" height="12" viewBox="0 0 12 12" stroke="#000"><path d="M.500.500l11 11M11.500.500l-11 11" /></svg>
        </div>
      </div>
      <div className={"h-[35px] shrink-0 bg-[#cbcbcb] flex items-center pl-[5px] gap-[10px] text-[13px] text-[#3c3c3c] " + UI}>
        {menus.map(([m, w]) => <Fit key={m} w={w}>{m}</Fit>)}
      </div>
      <MainToolbar />
      <LayerToolbar />
      <div className="h-[860px] shrink-0 flex">
        <ToolPalette />
        <FilterPanel />
        <div className="w-[4px] shrink-0 bg-[#d9d9d9]" />
        <BoardArea />
      </div>
      <StatusBar />
      <Taskbar />
    </div>
  );
}
